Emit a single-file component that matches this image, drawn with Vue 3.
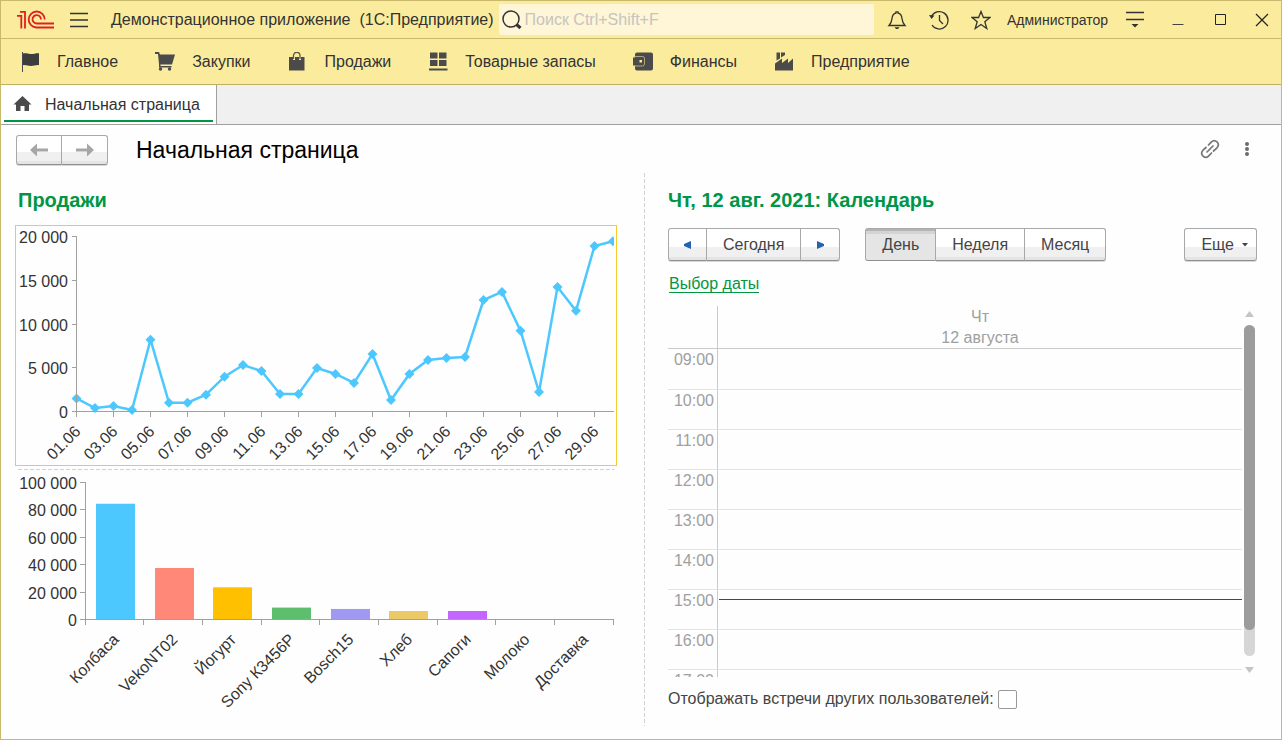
<script setup>
import { ref } from 'vue'

const sections = [
  { name: 'Главное', icon: 'flag' },
  { name: 'Закупки', icon: 'cart' },
  { name: 'Продажи', icon: 'bag' },
  { name: 'Товарные запасы', icon: 'boxes' },
  { name: 'Финансы', icon: 'wallet' },
  { name: 'Предприятие', icon: 'factory' },
]

// Daily sales, 1–30 June
const daily = [
  1500, 400, 630, 170, 8200, 1000, 1000, 1920, 3980, 5310,
  4630, 2000, 2000, 4970, 4290, 3260, 6570, 1310, 4290, 5890,
  6110, 6230, 12740, 13660, 9230, 2230, 14230, 11520, 18910, 19450,
]
const lineBase = 185.5
const points = daily.map((v, i) => ({
  x: 60.5 + i * 18.5,
  y: lineBase - (v * 175) / 20000,
}))
const polyline = points.map((p) => `${p.x},${p.y}`).join(' ')
const lineTicks = [0, 5000, 10000, 15000, 20000].map((v) => ({
  label: format(v),
  y: Math.floor(lineBase - (v * 175) / 20000) + 0.5,
}))
const dayTicks = points
  .map((p, i) => ({ x: p.x, label: String(i + 1).padStart(2, '0') + '.06' }))
  .filter((_, i) => i % 2 === 0)

// Sales by product
const products = [
  { name: 'Колбаса', value: 84500, color: '#4dc8ff' },
  { name: 'VekoNT02', value: 37600, color: '#ff8879' },
  { name: 'Йогурт', value: 23500, color: '#ffc000' },
  { name: 'Sony К3456P', value: 8700, color: '#5dbf6d' },
  { name: 'Bosch15', value: 7700, color: '#9f99f2' },
  { name: 'Хлеб', value: 6200, color: '#ebca66' },
  { name: 'Сапоги', value: 6200, color: '#c565ff' },
  { name: 'Молоко', value: 0, color: '#4dc8ff' },
  { name: 'Доставка', value: 0, color: '#ff8879' },
]
const barBase = 147.5
const step = 528 / 9
const bars = products.map((p, i) => ({
  ...p,
  x: Math.round(71 + i * step + 10),
  mid: 70.5 + (i + 0.5) * step,
  h: (p.value * 137) / 100000,
}))
const barTicks = [0, 20000, 40000, 60000, 80000, 100000].map((v) => ({
  label: format(v),
  y: Math.floor(barBase - (v * 137) / 100000) + 0.5,
}))
const edges = Array.from({ length: 10 }, (_, i) => Math.floor(70 + i * step) + 0.5)

function format(v) {
  return String(v).replace(/\B(?=(\d{3})+$)/g, ' ')
}

const hours = ['09:00', '10:00', '11:00', '12:00', '13:00', '14:00', '15:00', '16:00', '17:00']
const modes = ['День', 'Неделя', 'Месяц']
const mode = ref('День')
const showOthers = ref(false)
const query = ref('')
</script>

<template>
  <div class="window">
    <header class="titlebar">
      <svg class="logo" width="38" height="20" viewBox="0 0 38 20" fill="none" stroke="#e02020" stroke-width="1.800">
        <path d="M0 5.800h4.300V18.500M3 1.800H8V18.500" />
        <path d="M27.700 9.500A8 8 0 1 0 19.700 17.500H37" />
        <path d="M23.900 9.500A4.200 4.200 0 1 0 19.700 13.500H37" />
      </svg>
      <button class="plain menu" aria-label="Главное меню">
        <svg width="18" height="16" viewBox="0 0 18 16" stroke="#333" stroke-width="1.300"><path d="M0 1.500h18M0 8h18M0 14.500h18" /></svg>
      </button>
      <span class="app-name">Демонстрационное приложение&nbsp; (1С:Предприятие)</span>
      <label class="search">
        <svg width="22" height="22" viewBox="0 0 22 22" fill="none" stroke="#333">
          <circle cx="10" cy="10" r="8" stroke-width="1.500" />
          <path d="M15.500 15.500l4 3.500" stroke-width="3" />
        </svg>
        <input v-model="query" type="text" placeholder="Поиск Ctrl+Shift+F" aria-label="Поиск" />
      </label>
      <div class="tools">
        <button class="plain" aria-label="Оповещения">
          <svg width="20" height="20" viewBox="0 0 20 20" fill="none" stroke="#333" stroke-width="1.300">
            <path d="M2 15.500C4.500 13 4.500 12 5 8.500C5.300 5.500 6.500 3.500 9 3V1.800h2V3c2.500.5 3.700 2.500 4 5.500.5 3.500.5 4.500 3 7z" />
            <path d="M7.500 17.200h5L11 19H9z" fill="#333" stroke="none" />
          </svg>
        </button>
        <button class="plain" aria-label="История">
          <svg width="20" height="20" viewBox="0 0 20 20" fill="none" stroke="#333" stroke-width="1.300">
            <path d="M2.300 7A8.700 8.700 0 1 1 3 15M10.500 5v5.500l3.500 3.500" />
            <path d="M0 5l5.500.5L2.500 9z" fill="#333" stroke="none" />
          </svg>
        </button>
        <button class="plain" aria-label="Избранное">
          <svg width="20" height="20" viewBox="0 0 20 20" fill="none" stroke="#333" stroke-width="1.300">
            <path d="M10 1.500l2.400 6H19l-5.200 4.200 2 6.800-5.800-4-5.800 4 2-6.800L1 7.500h6.600z" />
          </svg>
        </button>
      </div>
      <a class="user" href="#">Администратор</a>
      <button class="plain service" aria-label="Сервис и настройки">
        <svg width="18" height="17" viewBox="0 0 18 17"><path d="M0 1.500h18M0 8.500h18" stroke="#333" stroke-width="1.400" /><path d="M5.500 13h7L9 16.500z" fill="#333" /></svg>
      </button>
      <div class="win-buttons">
        <button class="plain" aria-label="Свернуть">
          <svg width="14" height="14" viewBox="0 0 14 14"><path d="M1.500 11.500h11" stroke="#444" /></svg>
        </button>
        <button class="plain" aria-label="Развернуть">
          <svg width="14" height="14" viewBox="0 0 14 14"><path d="M2.500 1.500h10v10h-10z" fill="none" stroke="#222" /></svg>
        </button>
        <button class="plain" aria-label="Закрыть">
          <svg width="14" height="14" viewBox="0 0 14 14"><path d="M1 1l12 12M13 1L1 13" stroke="#222" stroke-width="1.200" /></svg>
        </button>
      </div>
    </header>

    <nav class="sections">
      <a v-for="s in sections" :key="s.name" href="#" class="section">
        <svg width="20" height="20" viewBox="0 0 20 20" fill="#4b4b4b">
          <g v-if="s.icon === 'flag'">
            <path d="M2 0h1v20H2z" />
            <path d="M3 1.500c3-.8 5 .6 8 .4 3 0 5-1 8-.7v12c-3-.4-5 .8-8 .8-3 0-5-1.200-8-.8z" fill="#3d3d3d" />
          </g>
          <g v-else-if="s.icon === 'cart'">
            <path d="M0 0h4l1 2.500h15L17 12.500H5.500V14h11v1.500H4V12L3 2H0z" />
            <circle cx="5.500" cy="17" r="1.700" /><circle cx="14.500" cy="17" r="1.700" />
          </g>
          <g v-else-if="s.icon === 'bag'">
            <path d="M2 5h4v3h2V5h4v3h2V5h3.500v13.500H2z" />
            <path d="M6.500 7V3.500C6.500-.7 13-.7 13 3.500V7" fill="none" stroke="#5a5648" stroke-width="1.300" />
          </g>
          <g v-else-if="s.icon === 'boxes'">
            <path d="M2 .5h7.500v6H2zM11 .5h7.500v6H11zM2 8h7.500v6H2zM11 8h7.500v6H11zM1 16.500h18.500v2H1z" />
          </g>
          <g v-else-if="s.icon === 'wallet'">
            <path d="M4 .5h14q2 0 2 2v14q0 2-2 2H4q-2 0-2-2v-3H0v-8h2v-3q0-2 2-2z" />
            <path d="M1 4.500h8.500q2 0 2 2v5.500q0 2-2 2H1" fill="none" stroke="#c9bf85" stroke-width=".8" />
            <path d="M6.500 8H9v2.500H6.500z" fill="#faec9d" />
          </g>
          <g v-else>
            <path d="M1 18.500V11.500l7-5V11l6-4.500V11l5-4.500v12z" />
            <path d="M2.500.5h3.500v6L2.500 8.500zM7 .5h4v2.500L7 5.500z" />
          </g>
        </svg>
        <span>{{ s.name }}</span>
      </a>
    </nav>

    <div class="tabs">
      <a href="#" class="tab">
        <svg width="20" height="18" viewBox="0 0 20 18" fill="#4b4b4b"><path d="M9.500 0l9 8.500H16V15h-4.500v-5h-4v5H3V8.500H.5z" /></svg>
        <span>Начальная страница</span>
      </a>
    </div>

    <main class="page">
      <div class="page-head">
        <div class="group">
          <button class="btn nav-btn" aria-label="Назад">
            <svg width="18" height="14" viewBox="0 0 18 14" fill="#a6a6a6"><path d="M0 7l7-6.500V5.500h11v3H7v5z" /></svg>
          </button>
          <button class="btn nav-btn" aria-label="Вперед">
            <svg width="18" height="14" viewBox="0 0 18 14" fill="#a6a6a6"><path d="M18 7l-7-6.500V5.500H0v3h11v5z" /></svg>
          </button>
        </div>
        <h1>Начальная страница</h1>
        <div class="head-tools">
          <button class="plain" aria-label="Получить ссылку">
            <svg width="20" height="20" viewBox="0 0 20 20" fill="none" stroke="#777" stroke-width="1.700" stroke-linecap="round">
              <path d="M7 13l6-6" />
              <path d="M8.500 6l3-3.200c3.500-3.300 9.300 1.700 5.500 6L13.500 12" />
              <path d="M11.500 14l-3 3.200c-3.500 3.300-9.300-1.700-5.500-6L6 8.500" />
            </svg>
          </button>
          <button class="plain" aria-label="Еще">
            <svg width="6" height="16" viewBox="0 0 6 16" fill="#6b6b6b"><circle cx="3" cy="3" r="2" /><circle cx="3" cy="8" r="2" /><circle cx="3" cy="13" r="2" /></svg>
          </button>
        </div>
      </div>

      <div class="columns">
        <section class="sales">
          <h2>Продажи</h2>
          <div class="chart-frame">
            <svg class="chart" viewBox="0 0 600 239" role="img" aria-label="Продажи по дням">
              <clipPath id="plot"><path d="M50 0H598V200H50z" /></clipPath>
              <g clip-path="url(#plot)">
                <polyline :points="polyline" fill="none" stroke="#4dc8ff" stroke-width="2.500" />
                <path v-for="p in points" :key="p.x" :d="`M${p.x} ${p.y - 5}l5 5l-5 5l-5-5z`" fill="#4dc8ff" />
              </g>
              <g class="axis">
                <path d="M60.500 10V186M60 185.500H598" />
                <path v-for="t in lineTicks" :key="t.label" :d="`M56 ${t.y}h5`" />
                <path v-for="t in dayTicks" :key="t.label" :d="`M${t.x} 186v5`" />
              </g>
              <text v-for="t in lineTicks" :key="t.label" x="52" :y="t.y + 6" text-anchor="end">{{ t.label }}</text>
              <text
                v-for="t in dayTicks"
                :key="t.label"
                :transform="`translate(${t.x + 5} ${lineBase + 21}) rotate(-45)`"
                text-anchor="end"
              >{{ t.label }}</text>
            </svg>
          </div>
          <div class="h-dash"></div>
          <svg class="chart" viewBox="0 0 602 248" role="img" aria-label="Продажи по товарам">
            <rect v-for="b in bars" :key="b.name" :x="b.x" :y="barBase - b.h" width="39" :height="b.h" :fill="b.color" />
            <g class="axis">
              <path d="M70.500 10V148M70 147.500H599" />
              <path v-for="t in barTicks" :key="t.label" :d="`M65 ${t.y}h6`" />
              <path v-for="x in edges" :key="x" :d="`M${x} 148v5`" />
            </g>
            <text v-for="t in barTicks" :key="t.label" x="62" :y="t.y + 6" text-anchor="end">{{ t.label }}</text>
            <text
              v-for="b in bars"
              :key="b.name"
              :transform="`translate(${b.mid + 5} ${barBase + 21}) rotate(-45)`"
              text-anchor="end"
            >{{ b.name }}</text>
          </svg>
        </section>

        <div class="v-dash"></div>

        <section class="calendar">
          <h2>Чт, 12 авг. 2021: Календарь</h2>
          <div class="cal-bar">
            <div class="group">
              <button class="btn arrow" aria-label="Предыдущий день">
                <svg width="8" height="8" viewBox="0 0 8 8" fill="#2463b4"><path d="M7 0v8L0 5V3z" /></svg>
              </button>
              <button class="btn">Сегодня</button>
              <button class="btn arrow" aria-label="Следующий день">
                <svg width="8" height="8" viewBox="0 0 8 8" fill="#2463b4"><path d="M1 0v8l7-3V3z" /></svg>
              </button>
            </div>
            <div class="group">
              <button v-for="m in modes" :key="m" class="btn" :class="{ pressed: m === mode }" @click="mode = m">{{ m }}</button>
            </div>
            <button class="btn more">
              Еще
              <svg width="6" height="4" viewBox="0 0 6 4" fill="#444"><path d="M0 0h6L3 3.500z" /></svg>
            </button>
          </div>
          <a href="#" class="pick">Выбор даты</a>

          <div class="schedule">
            <div class="grid-clip">
              <table>
                <thead>
                  <tr>
                    <th class="hour"></th>
                    <th>Чт<br />12 августа</th>
                  </tr>
                </thead>
                <tbody>
                  <tr v-for="h in hours" :key="h">
                    <td class="hour">{{ h }}</td>
                    <td><div v-if="h === '15:00'" class="now"></div></td>
                  </tr>
                </tbody>
              </table>
            </div>
            <div class="scrollbar">
              <svg width="9" height="6" viewBox="0 0 9 6" fill="#c4c4c4"><path d="M4.500 0L9 6H0z" /></svg>
              <div class="track"><div class="thumb"></div></div>
              <svg width="9" height="6" viewBox="0 0 9 6" fill="#c4c4c4"><path d="M4.500 6L9 0H0z" /></svg>
            </div>
          </div>

          <label class="others">
            <span>Отображать встречи других пользователей:</span>
            <input v-model="showOthers" type="checkbox" />
          </label>
        </section>
      </div>
    </main>
  </div>
</template>

<style>
body {
  margin: 0;
}
</style>

<style scoped>
.window {
  box-sizing: border-box;
  min-height: 100vh;
  display: flex;
  flex-direction: column;
  border: 1px solid #c9b96c;
  background: #fefefe;
  font: 16px/20px "Liberation Sans", Arial, sans-serif;
  color: #333;
}
a {
  color: inherit;
  text-decoration: none;
}
button,
input {
  font: inherit;
  color: inherit;
}
svg {
  display: block;
  flex: none;
}
.plain {
  display: flex;
  align-items: center;
  padding: 0;
  border: 0;
  background: none;
}
.titlebar {
  display: flex;
  align-items: center;
  height: 37px;
  padding: 0 12px 0 16px;
  background: #fbec9d;
  border-bottom: 1px solid #c9b96c;
}
.menu {
  margin-left: 15px;
}
.app-name {
  margin-left: 23px;
  white-space: nowrap;
}
.search {
  flex: 1;
  min-width: 0;
  display: flex;
  align-items: center;
  height: 31px;
  margin-left: 5px;
  padding-left: 2px;
  border-radius: 2px;
  background: #fef6d6;
}
.search input {
  flex: 1;
  min-width: 0;
  margin-left: 2px;
  padding: 0;
  border: 0;
  outline: 0;
  background: none;
}
.search input::placeholder {
  color: #c6c4c0;
  opacity: 1;
}
.tools {
  display: flex;
  gap: 22px;
  margin-left: 13px;
}
.user {
  margin-left: 16px;
  font-size: 14px;
}
.service {
  margin-left: 18px;
}
.win-buttons {
  display: flex;
  gap: 28px;
  margin-left: 27px;
}
.sections {
  display: flex;
  align-items: center;
  gap: 37px;
  height: 45px;
  padding-left: 19px;
  background: #fbec9d;
  border-bottom: 1px solid #c2b062;
}
.section {
  display: flex;
  align-items: center;
  gap: 17px;
  white-space: nowrap;
}
.tabs {
  display: flex;
  height: 39px;
  background: #f0f0f0;
  border-bottom: 1px solid #a0a0a0;
}
.tab {
  position: relative;
  display: flex;
  align-items: center;
  gap: 12px;
  padding: 0 16px 0 12px;
  background: #fff;
  border-right: 1px solid #a0a0a0;
}
.tab::after {
  content: "";
  position: absolute;
  left: 3px;
  right: 3px;
  bottom: 2px;
  height: 2px;
  background: #009646;
}
.page {
  flex: 1;
  display: flex;
  flex-direction: column;
  padding: 9px 24px 13px 14px;
}
.page-head {
  display: flex;
  align-items: center;
  height: 31px;
  margin-bottom: 8px;
}
.page-head .group {
  margin-left: 1px;
}
h1 {
  margin: 0 0 0 28px;
  font-size: 23px;
  line-height: 28px;
  font-weight: 400;
  color: #000;
}
.head-tools {
  display: flex;
  align-items: center;
  gap: 24px;
  margin-left: auto;
  padding: 0 7px 2px 0;
}
h2 {
  margin: 14px 0 12px;
  font-size: 20px;
  line-height: 26px;
  font-weight: 700;
  color: #009646;
}
.columns {
  flex: 1;
  display: grid;
  grid-template-columns: 602fr 5px 589fr;
  column-gap: 23px;
}
.sales,
.calendar {
  min-width: 0;
}
.sales h2 {
  margin-left: 3px;
}
.chart-frame {
  border: 1px solid #f5cc2e;
}
.chart {
  width: 100%;
  height: auto;
}
.chart text {
  font-size: 16px;
  fill: #333;
}
.axis path {
  fill: none;
  stroke: #a0a0a0;
}
.h-dash {
  height: 1px;
  margin: 3px 3px 2px;
  background: repeating-linear-gradient(to right, #d2d2d2 0 4px, transparent 4px 6px);
}
.v-dash {
  width: 1px;
  justify-self: end;
  background: repeating-linear-gradient(to bottom, #d2d2d2 0 4px, transparent 4px 6px);
}
.group {
  display: flex;
}
.btn {
  box-sizing: border-box;
  height: 33px;
  display: flex;
  align-items: center;
  justify-content: center;
  padding: 0 16px;
  border: 1px solid #a8a8a8;
  border-bottom-color: #8f8f8f;
  border-radius: 3px;
  background: linear-gradient(#fff 0 58%, #f0f0f0 58% 90%, #e4e4e4 90%);
  box-shadow: 0 1px 0 #d8d8d8;
  color: #444;
}
.group .btn + .btn {
  border-left: 0;
}
.group .btn:not(:first-child) {
  border-top-left-radius: 0;
  border-bottom-left-radius: 0;
}
.group .btn:not(:last-child) {
  border-top-right-radius: 0;
  border-bottom-right-radius: 0;
}
.group .nav-btn {
  width: 46px;
  height: 30px;
  padding: 0;
}
.btn.pressed {
  background: linear-gradient(#b4b4b4 0 2px, #d4d4d4 2px 5px, #e5e5e5 5px);
  box-shadow: none;
}
.group .arrow {
  width: 39px;
  padding: 0;
}
.calendar {
  display: flex;
  flex-direction: column;
}
.cal-bar {
  display: flex;
  gap: 25px;
  margin-top: 3px;
}
.more {
  margin-left: auto;
  padding-right: 8px;
  gap: 8px;
}
.pick {
  align-self: flex-start;
  margin: 14px 0 0 1px;
  line-height: 17px;
  border-bottom: 1px solid #009646;
  color: #009646;
}
.schedule {
  flex: 1 1 0;
  display: flex;
  min-height: 200px;
  margin-top: 13px;
}
.grid-clip {
  flex: 1;
  height: 0;
  min-height: 100%;
  overflow: hidden;
}
table {
  width: 100%;
  table-layout: fixed;
  border-collapse: separate;
  border-spacing: 0;
  color: #a0a0a0;
}
th {
  height: 42px;
  padding: 0;
  border-bottom: 1px solid #cacaca;
  font-weight: 400;
  line-height: 21px;
}
td {
  box-sizing: border-box;
  position: relative;
  height: 40px;
  padding: 0;
  border-bottom: 1px solid #e3e3e3;
  vertical-align: top;
}
tbody tr:first-child td {
  height: 41px;
}
.hour {
  width: 49px;
  border-right: 1px solid #cacaca;
}
td.hour {
  padding: 1px 3px 0 0;
  text-align: right;
}
.now {
  position: absolute;
  left: 1px;
  right: 0;
  top: 9px;
  height: 1px;
  background: #f00000;
}
.scrollbar {
  display: flex;
  flex-direction: column;
  align-items: center;
  width: 11px;
  margin: 0 2px;
  padding: 5px 0 4px;
}
.track {
  flex: 1;
  width: 11px;
  margin: 8px 0 11px;
  border-radius: 6px;
  background: #d6d6d6;
}
.thumb {
  height: 92%;
  border-radius: 6px;
  background: #9c9c9c;
}
.others {
  display: flex;
  align-items: center;
  gap: 4px;
  margin: 12px 0 17px;
  color: #444;
}
.others input {
  appearance: none;
  box-sizing: border-box;
  width: 19px;
  height: 19px;
  margin: 0;
  border: 1px solid #999;
  border-radius: 2px;
  background: #fff;
}
</style>
